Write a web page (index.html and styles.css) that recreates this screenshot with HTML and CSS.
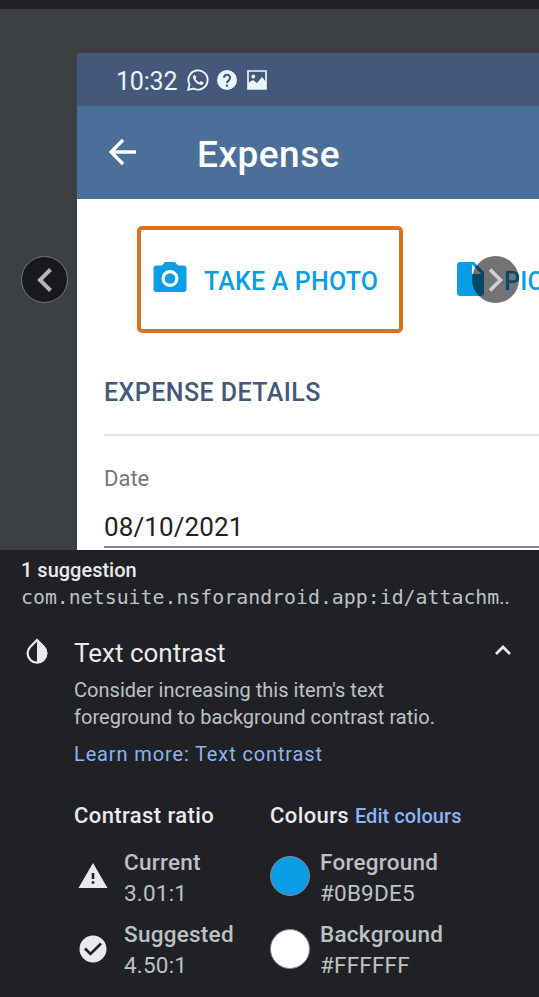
FILE: index.html
```html
<!DOCTYPE html>
<html lang="en">
<head>
<meta charset="utf-8">
<title>Accessibility scan</title>
<link rel="stylesheet" href="styles.css">
</head>
<body>
<main class="scanner">
  <div class="topbar"></div>
  <section class="preview">
    <div class="phone">
      <div class="status">
        <span class="clock">10:32</span>
        <svg class="whatsapp" viewBox="0 0 24 24" width="24" height="24"><path d="M2.200 21.800 3.500 16.400A9.600 9.600 0 1 1 7.600 20.500z" fill="none" stroke="currentColor" stroke-width="1.900"/><path d="M8.600 6.700c-.5 0-1.600.9-1.600 2.400 0 3.300 4.400 7.800 8 7.800 1.500 0 2.600-.9 2.600-2.400l-2.800-1.500-1.300 1.500c-1.800-.7-3.200-2-4-3.700l1-1.300z" fill="currentColor"/></svg>
        <svg class="help" viewBox="0 0 20 20" width="20" height="20"><circle cx="10" cy="10" r="10" fill="currentColor"/><path d="M7 7.800a3 3 0 1 1 5 2.200C10.700 11.100 10 11.500 10 13" fill="none" stroke="#43587a" stroke-width="2.200"/><path d="M8.900 14.500h2.200v2.200H8.900z" fill="#43587a"/></svg>
        <svg class="image" viewBox="0 0 20 20" width="20" height="20"><path d="M1 1h18v18H1z" fill="none" stroke="currentColor" stroke-width="1.700"/><circle cx="6.300" cy="6.500" r="1.900" fill="currentColor"/><path d="M1 13l5-3 4 3 5-6 4 5v7H1z" fill="currentColor"/></svg>
      </div>
      <header class="appbar">
        <svg viewBox="0 0 28 28" width="28" height="28"><path d="M27 14H3M14 2 2 14l12 12" fill="none" stroke="currentColor" stroke-width="3.300"/></svg>
        <h1>Expense</h1>
      </header>
      <div class="actions">
        <div class="action photo">
          <svg viewBox="0 0 34 30" width="34" height="30"><path fill-rule="evenodd" d="M3.500 3.500H9L12 0h10l3 3.500h5.500a3 3 0 0 1 3 3V27a3 3 0 0 1-3 3h-27a3 3 0 0 1-3-3V6.500a3 3 0 0 1 3-3zM17 8a8.500 8.500 0 1 0 0 17 8.500 8.500 0 0 0 0-17z" fill="currentColor"/><circle cx="17" cy="16.500" r="5.300" fill="currentColor"/></svg>
          <span>TAKE A PHOTO</span>
        </div>
        <div class="action pick">
          <svg viewBox="0 0 27 34" width="27" height="34"><path fill-rule="evenodd" d="M3 0h14l10 10v21a3 3 0 0 1-3 3H3a3 3 0 0 1-3-3V3a3 3 0 0 1 3-3zm12 2.500V12h9.500z" fill="currentColor"/></svg>
          <span>PIC</span>
        </div>
      </div>
      <h2 class="section-title">EXPENSE DETAILS</h2>
      <div class="field">
        <span class="label">Date</span>
        <span class="value">08/10/2021</span>
      </div>
    </div>
    <div class="nav prev"><svg viewBox="0 0 16 24" width="16" height="24"><path d="M13.500 1.500 3 12l10.500 10.500" fill="none" stroke="currentColor" stroke-width="4"/></svg></div>
    <div class="nav next"><svg viewBox="0 0 16 24" width="16" height="24"><path d="M2 1.500 12.500 12 2 22.500" fill="none" stroke="currentColor" stroke-width="3.600"/></svg></div>
  </section>
  <section class="report">
    <p class="count">1 suggestion</p>
    <p class="resource">com.netsuite.nsforandroid.app:id/attachm<span class="dots">..</span></p>
    <div class="issue-head">
      <svg class="drop" viewBox="0 0 22 26" width="22" height="26"><path d="M11 2 4.300 8.700a9.400 9.400 0 1 0 13.400 0z" fill="none" stroke="currentColor" stroke-width="2.200"/><path d="M11 1v24a10 10 0 0 0 7.300-17z" fill="currentColor"/></svg>
      <h3>Text contrast</h3>
      <svg class="chevron" viewBox="0 0 16 10" width="16" height="10"><path d="m1 9 7-7 7 7" fill="none" stroke="currentColor" stroke-width="2.700"/></svg>
    </div>
    <div class="issue-body">
      <p class="explain">Consider increasing this item's text<br>foreground to background contrast ratio.</p>
      <a class="learn">Learn more: Text contrast</a>
      <div class="columns">
        <div class="column">
          <h4>Contrast ratio</h4>
          <div class="entry">
            <svg viewBox="0 0 40 40" width="40" height="40"><path fill-rule="evenodd" d="M19 7 33.500 32h-29zM17.700 17v6h2.600v-6zm0 8.300v2.500h2.600v-2.500z" fill="currentColor"/></svg>
            <dl><dt>Current</dt><dd>3.01:1</dd></dl>
          </div>
          <div class="entry">
            <svg viewBox="0 0 40 40" width="40" height="40"><circle cx="19" cy="20" r="13.500" fill="currentColor"/><path d="m11 19.500 5.500 5.500L27 14.500" fill="none" stroke="#202124" stroke-width="2.600"/></svg>
            <dl><dt>Suggested</dt><dd>4.50:1</dd></dl>
          </div>
        </div>
        <div class="column">
          <h4>Colours <a>Edit colours</a></h4>
          <div class="entry">
            <i class="swatch blue"></i>
            <dl><dt>Foreground</dt><dd>#0B9DE5</dd></dl>
          </div>
          <div class="entry">
            <i class="swatch white"></i>
            <dl><dt>Background</dt><dd>#FFFFFF</dd></dl>
          </div>
        </div>
      </div>
    </div>
  </section>
</main>
</body>
</html>
```
FILE: styles.css
```css
* { box-sizing: border-box; margin: 0; padding: 0; }
html, body { height: 100%; overflow: hidden; }
body { font-family: Roboto, sans-serif; background: #202124; }
svg { display: block; flex: none; }
span, h1, h2, h3, h4, p, a, dt, dd { white-space: nowrap; }

.scanner { height: 997px; width: 539px; overflow: hidden; display: flex; flex-direction: column; }
.topbar { height: 9px; background: #202124; }
.preview { position: relative; height: 541px; background: #3c4043; padding: 44px 0 0 77px; overflow: hidden; }
.phone { height: 497px; background: #fff; overflow: hidden; }

.status { height: 53px; background: #43587a; color: #edf3fb; display: flex; align-items: center; padding: 2px 0 0 39px; }
.clock { font-size: 25px; width: 70px; letter-spacing: -0.2px; padding-top: 2px; }
.whatsapp { margin-top: -1px; }
.help { margin: -1px 0 0 7px; }
.image { margin: -1px 0 0 10px; }

.appbar { height: 93px; background: #4c6f9a; color: #fff; display: flex; align-items: center; padding-left: 32px; }
.appbar svg { margin-top: -1px; }
.appbar h1 { font-size: 37px; font-weight: 500; margin: 3px 0 0 60px; letter-spacing: 0.5px; }

.actions { display: flex; height: 135px; padding: 27px 0 0 60px; }
.action { display: flex; align-items: center; height: 107px; color: #0b9de5; font-size: 25px; font-weight: 500; letter-spacing: 0.18px; flex: none; }
.action span { padding-top: 3px; }
.photo { width: 266px; border: 4px solid #d9721e; border-radius: 5px; padding-left: 12px; gap: 17px; }
.photo svg { margin-top: -5px; }
.pick { margin-left: 54px; gap: 20px; }
.pick svg { margin-top: -2px; }

.section-title { height: 102px; margin-left: 27px; padding-top: 43px; line-height: 32px; border-bottom: 2px solid #e1e1e1; color: #43587a; font-size: 25px; font-weight: 500; letter-spacing: 0.44px; }
.field { margin-left: 27px; height: 112px; border-bottom: 2px solid #858585; padding-top: 29px; display: flex; flex-direction: column; }
.label { font-size: 22px; line-height: 28px; color: #777; }
.value { font-size: 26px; line-height: 32px; margin-top: 18px; color: #222; letter-spacing: 0.1px; }

.nav { position: absolute; top: 247px; width: 47px; height: 47px; border-radius: 50%; display: flex; align-items: center; justify-content: center; }
.prev { left: 21px; background: #17191c; border: 1px solid #777; color: #b5b5b5; }
.next { left: 472px; background: rgba(0, 0, 0, .55); color: #d0d0d0; }

.report { height: 447px; color: #e8eaed; padding: 6px 0 0 22px; }
.count { font-size: 20px; line-height: 28px; font-weight: 500; margin-left: -1px; }
.resource { font-family: "DejaVu Sans Mono", monospace; font-size: 19.880px; line-height: 28px; color: #bdc1c6; margin-left: -1px; }
.dots { font-family: Roboto, sans-serif; }
.issue-head { display: flex; align-items: center; height: 46px; margin-top: 16px; padding-left: 4px; }
.issue-head h3 { font-size: 26px; font-weight: 400; width: 421px; margin-left: 26px; padding-top: 3px; }
.drop { margin-top: -1px; }
.chevron { margin-top: -2px; }
.issue-body { margin: 3px 0 0 52px; }
.explain { font-size: 20px; line-height: 27px; color: #bdc1c6; letter-spacing: 0.03px; }
.learn { display: block; font-size: 20px; line-height: 27px; margin-top: 10px; color: #8ab4f8; letter-spacing: 0.870px; }
.columns { display: flex; margin-top: 32px; }
.column { width: 196px; flex: none; }
.column h4 { font-size: 22px; line-height: 32px; font-weight: 500; letter-spacing: 0.4px; }
.column h4 a { font-size: 20px; color: #8ab4f8; letter-spacing: 0.06px; }
.entry { display: flex; align-items: center; height: 62px; margin-top: 13px; gap: 10px; color: #e8eaed; }
.entry + .entry { margin-top: 11px; }
.entry dl { color: #bdc1c6; font-size: 22.500px; line-height: 31px; padding-top: 3px; }
.entry + .entry dl { padding-top: 1px; }
.entry dt { font-weight: 500; letter-spacing: 0.26px; }
.entry dd { letter-spacing: 0.2px; }
.swatch { width: 40px; height: 40px; border-radius: 50%; border: 1px solid #80868b; flex: none; }
.blue { background: #0b9de5; }
.white { background: #fff; }
```
